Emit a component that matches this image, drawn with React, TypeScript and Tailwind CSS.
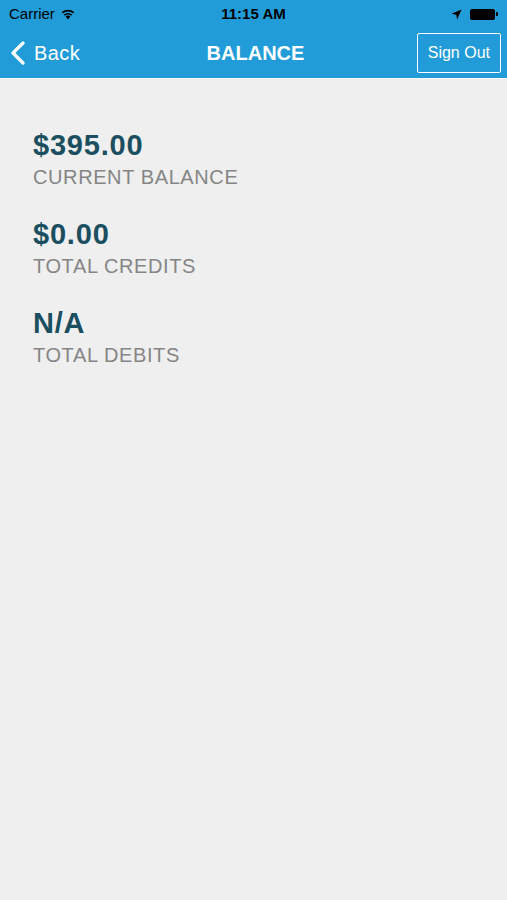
import React from 'react';

const rows = [
    { value: '$395.00', label: 'CURRENT BALANCE' },
    { value: '$0.00', label: 'TOTAL CREDITS' },
    { value: 'N/A', label: 'TOTAL DEBITS' },
];

const Wifi = () => (
    <svg width="16" height="12" viewBox="0 0 16 12" fill="black">
        <path d="M8 11.5 L5.6 8.6 A3.6 3.6 0 0 1 10.4 8.6 Z" />
        <path d="M3.9 6.6 A6.2 6.2 0 0 1 12.1 6.6 L11.1 7.8 A4.7 4.7 0 0 0 4.9 7.8 Z" />
        <path d="M1.8 4.1 A9.4 9.4 0 0 1 14.2 4.1 L13.2 5.4 A7.8 7.8 0 0 0 2.8 5.4 Z" />
    </svg>
);

export default function App() {
    return (
        <div className="w-[507px] h-[900px] bg-[#efefef] flex flex-col" style={{ fontFamily: '"Liberation Sans", Arial, sans-serif' }}>
            {/* header */}
            <div className="bg-[#219cd8] h-[78px] flex flex-col flex-shrink-0">
                {/* status bar */}
                <div className="h-[28px] flex items-center justify-between px-[9px] text-[15px] text-black">
                    <div className="flex items-center gap-[5px] w-[120px]">
                        <span>Carrier</span>
                        <Wifi />
                    </div>
                    <span className="font-bold">11:15 AM</span>
                    <div className="flex items-center justify-end gap-[8px] w-[120px]">
                        <svg width="11" height="11" viewBox="0 0 11 11" fill="black">
                            <path d="M10.5 0.5 L0.5 4.8 L5.2 5.8 L6.2 10.5 Z" />
                        </svg>
                        <div className="flex items-center">
                            <div className="w-[25px] h-[11px] bg-black rounded-[2px]" />
                            <div className="w-[2px] h-[4px] bg-black rounded-r-[1px] ml-[1px]" />
                        </div>
                    </div>
                </div>
                {/* nav */}
                <div className="flex-1 flex items-center justify-between pl-[10px] pr-[6px] text-white">
                    <div className="flex items-center gap-[8px] w-[120px]">
                        <svg width="16" height="24" viewBox="0 0 16 24" fill="none" stroke="white" strokeWidth="3.2" strokeLinecap="round" strokeLinejoin="round">
                            <path d="M13 2 L3 12 L13 22" />
                        </svg>
                        <span className="text-[20px] tracking-[0.4px]">Back</span>
                    </div>
                    <span className="text-[20px] font-bold">BALANCE</span>
                    <div className="w-[120px] flex justify-end">
                        <button className="border-[1.5px] border-white rounded-[2px] h-[40px] px-[10px] text-[16px] text-white">
                            Sign Out
                        </button>
                    </div>
                </div>
            </div>
            <div className="h-px bg-[#f8f8f8]" />

            {/* content */}
            <div className="flex flex-col gap-[23px] pl-[33px] pt-[49px]">
                {rows.map(r => (
                    <div key={r.label} className="flex flex-col">
                        <span className="text-[29px] leading-[34px] font-bold tracking-[0.8px] text-[#1b4f5f]">{r.value}</span>
                        <span className="text-[20px] leading-[33px] tracking-[0.6px] text-[#858585] -mt-[1px]">{r.label}</span>
                    </div>
                ))}
            </div>
        </div>
    );
}
